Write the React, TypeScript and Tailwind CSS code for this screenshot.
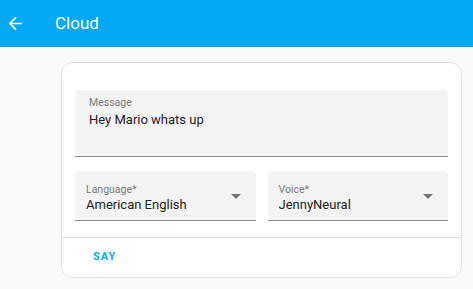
import { ArrowLeft } from 'lucide-react'

function Field({ label, value, className }: { label: string; value: string; className?: string }) {
    return (
        <div className={`relative bg-[#f4f4f4] rounded-t border-b border-[#8c8c8c] ${className ?? ''}`}>
            <div className="pl-[11px] pt-[13px] text-[10.5px] leading-[12px] text-[#7a7a7a]">{label}</div>
            <div className="pl-[11px] text-[13px] leading-[18px] text-[#212121]">{value}</div>
            <svg className="absolute right-[15px] top-[23px] w-[10px] h-[5px]" viewBox="0 0 10 5">
                <path d="M0 0h10L5 5z" fill="#757575" />
            </svg>
        </div>
    )
}

export default function App() {
    return (
        <div className="w-[473px] h-[289px] bg-[#fafafa] font-['Roboto',sans-serif] overflow-hidden">
            <div className="h-[47px] bg-[#03a9f4] flex items-center text-white">
                <ArrowLeft className="ml-[6px] w-[19px] h-[19px]" strokeWidth={2.2} />
                <span className="ml-[30px] text-[17px]">Cloud</span>
            </div>
            <div className="pl-[61px] pr-[11px] pt-[15px]">
                <div className="bg-white border border-[#e0e0e0] rounded-[12px] h-[216px] flex flex-col">
                    <div className="px-[13px] pt-[27px]">
                        <div className="bg-[#f4f4f4] rounded-t border-b border-[#8c8c8c] h-[67px]">
                            <div className="pl-[14px] pt-[7px] text-[10.5px] leading-[12px] text-[#7a7a7a]">Message</div>
                            <div className="pl-[14px] pt-[1px] text-[13px] leading-[20px] text-[#212121]">Hey Mario whats up</div>
                        </div>
                        <div className="flex gap-[12px] mt-[14px]">
                            <Field label="Language*" value="American English" className="flex-1 h-[50px]" />
                            <Field label="Voice*" value="JennyNeural" className="flex-1 h-[50px]" />
                        </div>
                    </div>
                    <div className="mt-[16px] border-t border-[#e0e0e0] flex-1 flex items-center">
                        <span className="ml-[31px] text-[11px] font-bold tracking-[1px] text-[#03a9f4]">SAY</span>
                    </div>
                </div>
            </div>
        </div>
    )
}
